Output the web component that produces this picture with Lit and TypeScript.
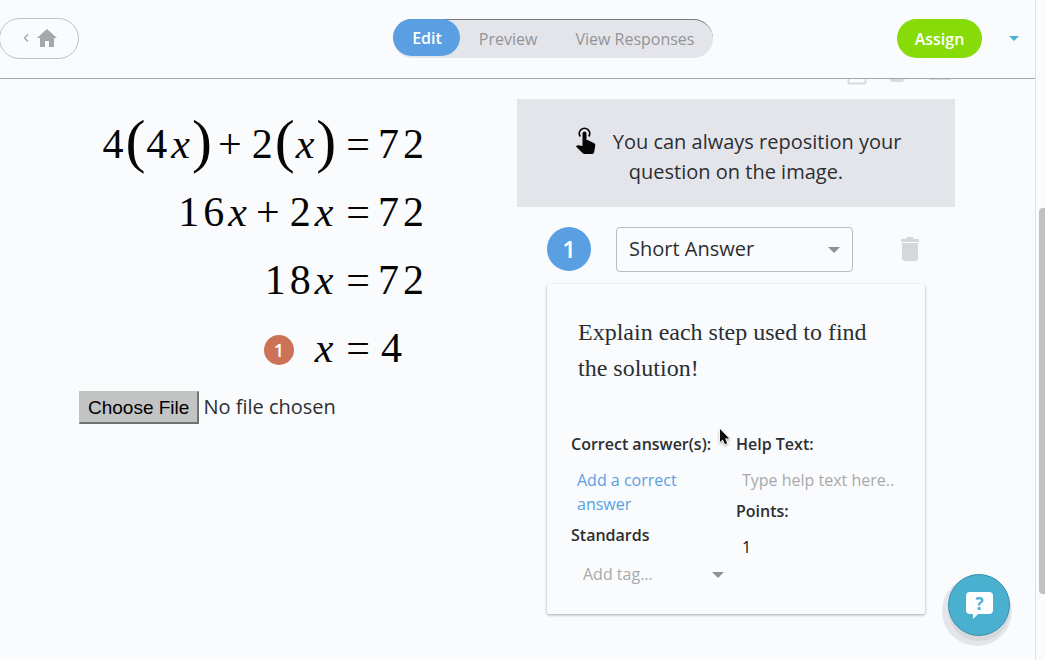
import { LitElement, html, css, svg } from "lit";
import { customElement, property, state } from "lit/decorators.js";
import { classMap } from "lit/directives/class-map.js";

type Token = [text: string, kind?: "v" | "op" | "par"];

const EQUATIONS: { left: Token[]; right: Token[]; single?: boolean }[] = [
  {
    left: [["4"], ["(", "par"], ["4"], ["x", "v"], [")", "par"], ["+", "op"], ["2"], ["(", "par"], ["x", "v"], [")", "par"]],
    right: [["7"], ["2"]],
  },
  { left: [["1"], ["6"], ["x", "v"], ["+", "op"], ["2"], ["x", "v"]], right: [["7"], ["2"]] },
  { left: [["1"], ["8"], ["x", "v"]], right: [["7"], ["2"]] },
  { left: [["x", "v"]], right: [["4"]], single: true },
];

@customElement("math-figure")
export class MathFigure extends LitElement {
  static styles = css`
    :host { display: block; position: relative; width: 347px; font: 42px/68px "Liberation Serif", serif; color: #050505; }
    .row { display: grid; grid-template-columns: 1fr auto 48px; height: 68px; align-items: baseline; }
    .side { display: flex; align-items: baseline; gap: 4px; }
    .left { justify-content: flex-end; }
    .single { padding-left: 3px; }
    .v { font-style: italic; }
    .op { margin: 0 6px 0 5px; }
    .par { align-self: center; font-size: 60px; line-height: 1; padding-bottom: 6px; margin: 0 -3px 0 -2px; }
    .eq { margin: 0 8px 0 13px; }
    .pin {
      position: absolute; left: 185px; top: 225px; width: 30px; height: 30px; border-radius: 50%;
      background: #cc7256; color: #fff; text-align: center; font: 600 18px/30px "Open Sans", sans-serif;
    }
  `;
  private tokens(list: Token[]) {
    return list.map(([t, kind]) => html`<span class=${kind ?? "n"}>${t}</span>`);
  }
  render() {
    return html`
      ${EQUATIONS.map(
        (e) => html`<div class="row">
          <div class="side left">${this.tokens(e.left)}</div>
          <span class="eq">=</span>
          <div class=${classMap({ side: true, single: !!e.single })}>${this.tokens(e.right)}</div>
        </div>`
      )}
      <span class="pin">1</span>
    `;
  }
}

@customElement("question-card")
export class QuestionCard extends LitElement {
  @property() prompt = "";
  static styles = css`
    :host {
      display: block; position: relative; box-sizing: border-box; padding: 30px 24px 28px;
      border-radius: 2px; box-shadow: 0 1px 3px rgba(0, 0, 0, 0.34);
      font: 16px/24px "Open Sans", sans-serif; color: #2c2e31;
    }
    .prompt { margin: 0 7px; height: 118px; font: 24px/36px "Liberation Serif", serif; }
    .cols { display: grid; grid-template-columns: 153px 1fr; column-gap: 12px; }
    .col { display: flex; flex-direction: column; align-items: stretch; }
    .label { font-weight: 600; font-size: 16px; line-height: 24px; white-space: nowrap; }
    .add { margin: 12px 6px 7px; color: #5a9fe2; text-decoration: none; }
    input, select {
      box-sizing: border-box; width: 100%; border: 0; outline: 0; background: none; appearance: none;
      font: 16px/24px "Open Sans", sans-serif; height: 24px; padding: 0 6px; color: #111;
    }
    input::placeholder { color: #a8a9ab; opacity: 1; }
    .help { margin: 12px 0 7px; }
    .points { margin-top: 12px; }
    .tag { position: relative; margin-top: 15px; }
    .tag select { padding: 0 12px; color: #a8a9ab; }
    .caret { position: absolute; right: 0; top: 10px; width: 12px; height: 6px; fill: #8f9194; pointer-events: none; }
    .cursor { position: absolute; left: 171px; top: 143px; width: 16px; height: 20px; pointer-events: none; overflow: visible; filter: drop-shadow(0 1px 1px rgba(0, 0, 0, 0.35)); }
  `;
  render() {
    return html`
      <div class="prompt">${this.prompt}</div>
      <div class="cols">
        <div class="col">
          <span class="label">Correct answer(s):</span>
          <a class="add" href="#answer">Add a correct answer</a>
          <label class="label" for="tag">Standards</label>
          <div class="tag">
            <select id="tag"><option>Add tag...</option></select>
            <svg class="caret" viewBox="0 0 12 6"><path d="M0 0h12L6 6z" /></svg>
          </div>
        </div>
        <div class="col">
          <label class="label" for="help">Help Text:</label>
          <input class="help" id="help" placeholder="Type help text here.." />
          <label class="label" for="points">Points:</label>
          <input class="points" id="points" inputmode="numeric" value="1" />
        </div>
      </div>
      <svg class="cursor" viewBox="0 0 16 20">
        <path d="M2 2V15L4.800 12.400L7 17.200L9.200 16.200L7.100 11.500H11.200Z" fill="#0a0a0a" stroke="#fff" stroke-width="1.600" stroke-linejoin="round" paint-order="stroke" />
      </svg>
    `;
  }
}

@customElement("app-root")
export class AppRoot extends LitElement {
  @state() private tab = "Edit";

  static styles = css`
    :host {
      display: grid; grid-template-columns: 1fr 10px; height: 100vh; overflow: hidden;
      background: #f9fbfd; font: 20px/30px "Open Sans", sans-serif; color: #2c2e31;
    }
    button { font: inherit; border: 0; background: none; padding: 0; cursor: pointer; }
    .page { position: relative; display: flex; flex-direction: column; min-width: 0; min-height: 0; }
    .header {
      display: grid; grid-template-columns: auto 315fr auto 184fr auto; align-items: center;
      box-sizing: border-box; height: 79px; padding-bottom: 2px; flex: none;
      border-bottom: 1px solid #a3a5a8; font-size: 16px; line-height: 24px;
    }
    .home {
      display: flex; align-items: center; gap: 8px; box-sizing: border-box; width: 80px; height: 41px;
      margin-left: -1px; padding-left: 23px; border: 1px solid #bfc1c4; border-radius: 21px;
    }
    .chev { width: 6px; height: 8px; }
    .house { width: 20px; height: 18px; }
    .tabs {
      grid-column: 3; display: flex; height: 38px; border-radius: 20px; background: #e4e5eb;
      border-top: 1px solid #77797c; box-sizing: content-box;
    }
    .tab { padding: 0 19px; color: #929497; height: 38px; }
    .tab.on { margin-top: -1px; background: #5a9fe2; color: #fff; border-radius: 20px; font-weight: 600; height: 37px; padding: 2px 18px 0 19px; }
    .actions { grid-column: 5; display: flex; align-items: center; gap: 27px; padding-right: 16px; }
    .assign { width: 85px; height: 39px; border-radius: 20px; background: #87db09; color: #fff; font-weight: 600; padding-top: 1px; }
    .more { display: flex; }
    .more svg { width: 10px; height: 5px; fill: #4ab0d0; }
    .main {
      flex: 1; min-height: 0; overflow: hidden; display: grid; grid-template-columns: 1fr 1fr;
      align-items: start; padding: 0 80px 0 79px;
    }
    .source { padding-top: 31px; }
    .file { display: block; margin-top: 9px; width: 100%; font: inherit; color: inherit; }
    .file::file-selector-button {
      box-sizing: border-box; height: 33px; margin: 0 4px 0 0; padding: 2px 8px 0; background: #c2c3c3; color: #000;
      border: 1px solid #c2c3c3; border-right: 2px solid #707273; border-bottom: 2px solid #707273;
      border-radius: 0; font: 19px/28px "Liberation Sans", sans-serif;
    }
    .tools { display: flex; justify-content: flex-end; height: 20px; padding-right: 4px; }
    .tools svg { width: 104px; height: 6px; }
    .tip {
      display: flex; justify-content: center; background: #e4e5eb; height: 108px; box-sizing: border-box;
      padding: 28px 46px; text-align: center;
    }
    .tip p { margin: 0; width: 346px; }
    .hand { width: 20px; height: 27px; margin: 0 12px 0 5px; vertical-align: -5px; }
    .question { padding: 20px 30px 0; }
    .qhead { display: flex; align-items: flex-start; margin-bottom: 12px; }
    .num {
      width: 44px; height: 44px; border-radius: 50%; background: #5a9fe2; color: #fff;
      font-size: 24px; line-height: 44px; font-weight: 600; text-align: center;
    }
    .type { position: relative; width: 237px; margin: 0 auto 0 25px; }
    .type select {
      display: block; width: 100%; height: 45px; box-sizing: border-box; padding: 0 12px 2px; border: 1px solid #b9bbbe;
      border-radius: 4px; background: none; appearance: none; font: 20px/30px "Open Sans", sans-serif; color: #2c2e31;
    }
    .type svg { position: absolute; right: 13px; top: 20px; width: 12px; height: 6px; fill: #8f9194; pointer-events: none; }
    .trash { display: flex; align-items: center; height: 44px; margin-right: 6px; }
    .trash svg { width: 18px; height: 24px; }
    .fab {
      position: absolute; right: 25px; bottom: 24px; width: 62px; height: 62px; border-radius: 50%;
      background: #4ab0d0; border: 1px solid #3b8fae; display: grid; place-items: center;
      box-shadow: 0 5px 0 0 #d6d8da, -2px 6px 0 4px #e4e5eb;
    }
    .fab svg { width: 27px; height: 27px; overflow: visible; }
    .q { font: 700 17px "Open Sans", sans-serif; fill: #4ab0d0; }
    .track { position: relative; border-left: 1px solid #dfe1e4; }
    .thumb { position: absolute; left: 3px; right: -4px; top: 208px; height: 386px; border-radius: 4px; background: #c0c1c2; }
  `;

  private trash() {
    return svg`<path d="M0 2h5l1-2h6l1 2h5v3H0zM1 6h16v15q0 3-3 3H4q-3 0-3-3z" fill="#d5d7d8"/>`;
  }

  render() {
    return html`
      <div class="page">
        <header class="header">
          <button class="home" aria-label="Home">
            <svg class="chev" viewBox="0 0 6 8"><path d="M5 .5L1.500 4 5 7.500" fill="none" stroke="#a3a4a6" stroke-width="1.300" /></svg>
            <svg class="house" viewBox="0 0 20 18"><path d="M10 0L0 9h3v9h5v-6h4v6h5V9h3z" fill="#a6a7a8" /></svg>
          </button>
          <nav class="tabs">
            ${["Edit", "Preview", "View Responses"].map(
              (t) => html`<button class=${classMap({ tab: true, on: this.tab === t })} @click=${() => (this.tab = t)}>${t}</button>`
            )}
          </nav>
          <div class="actions">
            <button class="assign">Assign</button>
            <button class="more" aria-label="More"><svg viewBox="0 0 10 5"><path d="M0 0h10L5 5z" /></svg></button>
          </div>
        </header>
        <main class="main">
          <section class="source">
            <math-figure></math-figure>
            <input class="file" type="file" aria-label="Image file" />
          </section>
          <section>
            <div class="tools">
              <svg viewBox="0 0 104 6">
                <path d="M1.500 0v3.500q0 1 1 1h15q1 0 1-1V0" fill="none" stroke="#d8dadc" stroke-width="2" />
                <path d="M42 0h16q-1 3-4 3h-8q-3 0-4-3z" fill="#d8dadc" />
                <path d="M82 0h22v1H82z" fill="#d8dadc" />
              </svg>
            </div>
            <div class="tip">
              <p>
                <svg class="hand" viewBox="0 0 20 27">
                  <path d="M4.200 9.500A5.200 5.200 0 1 1 12.800 9.500" fill="none" stroke="#050505" stroke-width="1.800" />
                  <path d="M6.500 6.500a2 2 0 0 1 4 0V13h1.200l6.600 3.300q1.200.7 1 2L18.200 25q-.3 2-2 2H8.500q-1 0-1.800-.8L0 19.500l1-1q.7-.5 1.500-.3l4 .9z" fill="#050505" />
                </svg>
                You can always reposition your question on the image.
              </p>
            </div>
            <div class="question">
              <div class="qhead">
                <span class="num">1</span>
                <div class="type">
                  <select aria-label="Question type"><option>Short Answer</option></select>
                  <svg viewBox="0 0 12 6"><path d="M0 0h12L6 6z" /></svg>
                </div>
                <button class="trash" aria-label="Delete question"><svg viewBox="0 0 18 24">${this.trash()}</svg></button>
              </div>
              <question-card prompt="Explain each step used to find the solution!"></question-card>
            </div>
          </section>
        </main>
        <button class="fab" aria-label="Help">
          <svg viewBox="0 0 27 27">
            <path d="M4 0h19q4 0 4 4v14q0 4-4 4H12l-5 5v-5H4q-4 0-4-4V4q0-4 4-4z" fill="#fff" />
            <text class="q" x="13.500" y="18" text-anchor="middle">?</text>
          </svg>
        </button>
      </div>
      <div class="track"><div class="thumb"></div></div>
    `;
  }
}
